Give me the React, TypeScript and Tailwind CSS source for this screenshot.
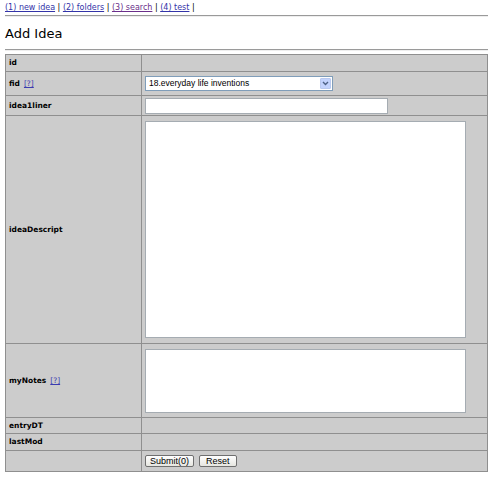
import React from 'react';

// one form row: label cell + value cell
function Row({ label, help, height, children, first }: { label?: string; help?: boolean; height: number; children?: React.ReactNode; first?: boolean }) {
  return (
    <div className={`grid grid-cols-[136px_1fr] ${first ? '' : 'border-t border-[#8f8f8f]'}`} style={{ height }}>
      <div className="flex items-center pl-[3px] border-r border-[#8f8f8f] text-[7.5px] font-bold text-black">
        {label}
        {help && <a href="#" className="ml-[4px] font-normal text-[#3b3bb0] underline">[?]</a>}
      </div>
      <div className="flex items-center pl-[3px] pr-[21px]">{children}</div>
    </div>
  );
}

export default function App() {
  return (
    <div className="min-h-screen bg-white px-[5px] pt-[2px] font-['DejaVu_Sans',Verdana,sans-serif] text-black">
      {/* nav */}
      <div className="text-[8px] leading-[11px] text-black">
        <a href="#" className="text-[#3434a8] underline">(1) new idea</a> |{' '}
        <a href="#" className="text-[#3434a8] underline">(2) folders</a> |{' '}
        <a href="#" className="text-[#6b2f8a] underline">(3) search</a> |{' '}
        <a href="#" className="text-[#3434a8] underline">(4) test</a> |
      </div>
      <div className="mt-[2px] border-t border-[#9a9a9a] border-b border-b-[#eeeeee]" />

      <h1 className="mt-[9px] text-[13px] leading-[16px] font-normal">Add Idea</h1>
      <div className="mt-[7px] border-t border-[#9a9a9a] border-b border-b-[#eeeeee]" />

      {/* form table */}
      <div className="mt-[3px] w-[483px] border border-[#8f8f8f] bg-[#cccccc]">
        <Row label="id" height={16} first />
        <Row label="fid" help height={24}>
          <div className="flex h-[15px] w-[188px] items-center border border-[#7f9db9] bg-white">
            <span className="flex-1 pl-[3px] font-['Liberation_Sans',Arial,sans-serif] text-[8.5px]">18.everyday life inventions</span>
            <span className="m-[1px] flex h-[11px] w-[11px] items-center justify-center rounded-[1px] border border-[#b9c9ef] bg-[#c3d3fd]">
              <svg width="7" height="5" viewBox="0 0 7 5"><path d="M1 1 L3.5 3.5 L6 1" stroke="#4d6185" strokeWidth="1.4" fill="none" /></svg>
            </span>
          </div>
        </Row>
        <Row label="idea1liner" height={20}>
          <div className="h-[16px] w-[243px] border border-[#a5acb2] bg-white" />
        </Row>
        <Row label="ideaDescript" height={228}>
          <div className="h-[217px] w-[321px] border border-[#a5acb2] bg-white" />
        </Row>
        <Row label="myNotes" help height={74}>
          <div className="h-[64px] w-[321px] border border-[#a5acb2] bg-white" />
        </Row>
        <Row label="entryDT" height={16} />
        <Row label="lastMod" height={17} />
        <Row height={21}>
          <div className="flex gap-[5px] font-['Liberation_Sans',Arial,sans-serif] text-[9px]">
            <button className="h-[12px] rounded-[2px] border border-[#6f6f6f] bg-gradient-to-b from-white to-[#e6e6e0] px-[4px] leading-[10px]">Submit(0)</button>
            <button className="h-[12px] rounded-[2px] border border-[#6f6f6f] bg-gradient-to-b from-white to-[#e6e6e0] px-[6px] leading-[10px]">Reset</button>
          </div>
        </Row>
      </div>
    </div>
  );
}
